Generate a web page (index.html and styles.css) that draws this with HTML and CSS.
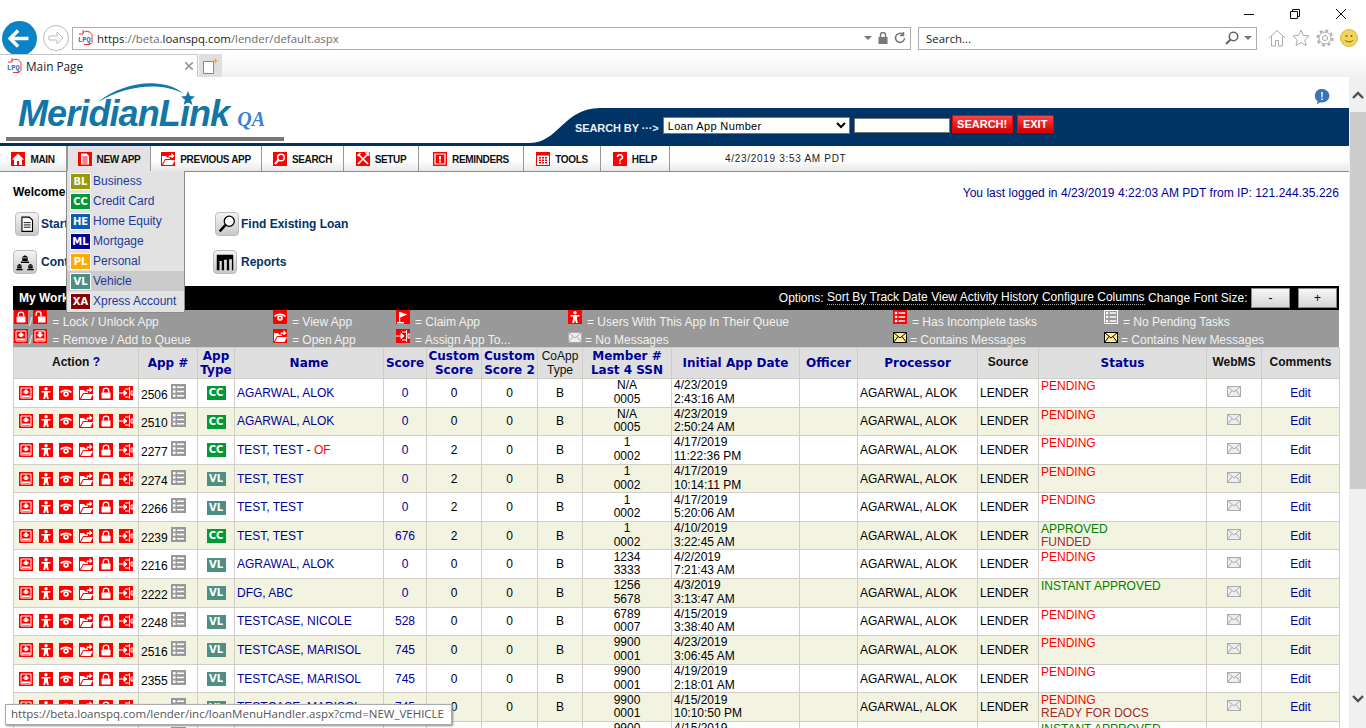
FILE: index.html
```html
<!DOCTYPE html>
<html>
<head>
<meta charset="utf-8">
<title>Main Page</title>
<link rel="stylesheet" href="styles.css">
</head>
<body>

<svg class="defs" width="0" height="0">
	<defs>
		<!-- red action icons, all on a 14 box -->
		<symbol id="i-queue" viewBox="0 0 14 14"><rect width="14" height="14" fill="#f00"/><path d="M2 2h10v10H2z" fill="none" stroke="#fff"/><path d="M7 3l3.500 3.500H8.500V8h-3V6.500H3.500z" fill="#fff"/><path d="M3 9.500h8V11H3z" fill="#fff"/></symbol>
		<symbol id="i-add" viewBox="0 0 14 14"><rect width="14" height="14" fill="#f00"/><path d="M2 2h10v10H2z" fill="none" stroke="#fff"/><path d="M7 9L3.500 5.500h2V3h3v2.500h2z" fill="#fff"/><path d="M3 9.500h8V11H3z" fill="#fff"/></symbol>
		<symbol id="i-person" viewBox="0 0 14 14"><rect width="14" height="14" fill="#f00"/><circle cx="7" cy="2.800" r="1.700" fill="#fff"/><path d="M2.500 5h9v1.500H9V9l.8 4H8L7 10l-1 3H4.200L5 9V6.500H2.500z" fill="#fff"/></symbol>
		<symbol id="i-eye" viewBox="0 0 14 14"><rect width="14" height="14" fill="#f00"/><path d="M1 6c2-3.500 10-3.500 12 0l-1.500 1C10 4.500 4 4.500 2.500 7z" fill="#fff"/><circle cx="7" cy="8" r="2.800" fill="#fff"/><circle cx="7" cy="8" r="1.100" fill="#f00"/></symbol>
		<symbol id="i-folder" viewBox="0 0 14 14"><rect width="14" height="14" fill="#f00"/><path d="M1 4h4l1 1.500h3V7H4L1 12.500z" fill="#fff"/><path d="M4.500 8H14l-2.500 5H2z" fill="#fff"/><path d="M7.500 3.500h3V1l3 3-3 2.500V5H8z" fill="#fff"/></symbol>
		<symbol id="i-lock" viewBox="0 0 14 14"><rect width="14" height="14" fill="#f00"/><path d="M4.300 6.500V4.800a2.700 2.700 0 0 1 5.400 0v1.700" fill="none" stroke="#fff" stroke-width="1.300"/><rect x="2.500" y="6.500" width="9" height="6" rx=".8" fill="#fff"/></symbol>
		<symbol id="i-unlock" viewBox="0 0 14 14"><rect width="14" height="14" fill="#f00"/><path d="M3 6V4a2.500 2.500 0 0 1 5 0v2.500" fill="none" stroke="#fff" stroke-width="1.300"/><rect x="5" y="6.500" width="7.500" height="6" fill="#fff"/></symbol>
		<symbol id="i-assign" viewBox="0 0 14 14"><rect width="14" height="14" fill="#f00"/><path d="M0 7h7M5 4.500L8 7l-3 2.500z" stroke="#fff" fill="#fff"/><path d="M6 3h4.500v8H6M10.500 1v2.500M10.500 10.500V13M12 5h2v4h-2z" stroke="#fff" fill="none"/></symbol>
		<symbol id="i-flag" viewBox="0 0 14 14"><rect width="14" height="14" fill="#f00"/><path d="M3 2h1.200v10H3zM4.200 2l7 2.500-7 3z" fill="#fff"/><path d="M1 12h7v1.500H1z" fill="#fff"/></symbol>
		<!-- task list, colour comes from the class -->
		<symbol id="i-list" viewBox="0 0 15 15"><rect width="15" height="15" fill="currentColor"/><path d="M2 2h2.500v2.500H2zM2 6.200h2.500v2.500H2zM2 10.500h2.500V13H2zM6 2.500h7v1.500H6zM6 6.700h7v1.500H6zM6 11h7v1.500H6z" fill="#fff"/></symbol>
		<symbol id="i-mail" viewBox="0 0 14 11"><rect x=".5" y=".5" width="13" height="10" fill="#eee" stroke="#aaa"/><path d="M.5 .5L7 6l6.500-5.500M.5 10.500L5 4.500M13.500 10.500L9 4.500" fill="none" stroke="#aaa"/></symbol>
		<symbol id="i-mail-new" viewBox="0 0 14 11"><rect x=".5" y=".5" width="13" height="10" fill="#ffef8a" stroke="#000"/><path d="M.5 .5L7 6l6.500-5.500M.5 10.500L5 4.500M13.500 10.500L9 4.500" fill="none" stroke="#000"/></symbol>
		<symbol id="fav" viewBox="0 0 16 16"><text x="0" y="12" font-family="Liberation Mono" font-size="7" font-weight="700" fill="#1a6fd0">LPQ</text><path d="M5 2.500a6 6 0 0 1 9 2v8l-2 2H6" fill="none" stroke="#e33"/><path d="M5 0v4H1" fill="none" stroke="#e33"/></symbol>
	</defs>
</svg>

<div class="chrome">
	<div class="winbar">
		<svg class="win-btn" viewBox="0 0 10 10"><path d="M0 5.500h10" stroke="#111"/></svg>
		<svg class="win-btn" viewBox="0 0 10 10"><path d="M.5 2.500h7v7h-7zM2.500 2.500v-2h7v7h-2" fill="none" stroke="#111"/></svg>
		<svg class="win-btn" viewBox="0 0 10 10"><path d="M0 0l10 10M10 0L0 10" stroke="#111"/></svg>
	</div>
	<div class="toolbar">
		<svg class="back" viewBox="0 0 37 37"><circle cx="18.500" cy="18.500" r="18.500" fill="#0a84c6"/><path d="M9 18.500h19M17 10l-8.500 8.500L17 27" fill="none" stroke="#fff" stroke-width="3.600"/></svg>
		<svg class="forward" viewBox="0 0 26 26"><circle cx="13" cy="13" r="12.500" fill="#fff" stroke="#bbb"/><path d="M6 11h8V7l6 6-6 6v-4H6z" fill="none" stroke="#bbb"/></svg>
		<div class="addr">
			<svg class="favicon"><use href="#fav"/></svg>
			<span class="addr-url">https<span class="addr-dim">://beta.</span>loanspq.com<span class="addr-dim">/lender/default.aspx</span></span>
			<span class="addr-tools">
				<span class="caret"></span>
				<svg class="tool-ic" viewBox="0 0 12 12"><rect x="1.500" y="5" width="9" height="7" fill="#777"/><path d="M3.500 5V3a2.500 2.500 0 0 1 5 0v2" fill="none" stroke="#777" stroke-width="1.500"/></svg>
				<svg class="tool-ic" viewBox="0 0 12 12"><path d="M10.500 6A4.500 4.500 0 1 1 9 2.500M9.500 0v3.500H6" fill="none" stroke="#777" stroke-width="1.500"/></svg>
			</span>
		</div>
		<div class="searchbox">
			<span>Search...</span>
			<span class="addr-tools">
				<svg class="tool-ic mag" viewBox="0 0 14 14"><circle cx="8.500" cy="5.500" r="4.200" fill="none" stroke="#666" stroke-width="1.600"/><path d="M5.500 8.500L1 13" stroke="#666" stroke-width="2"/></svg>
				<span class="caret"></span>
			</span>
		</div>
		<div class="toolicons">
			<svg class="ti" viewBox="0 0 18 18"><path d="M1 9l8-7.500L17 9M3.500 7.500V17h4v-5.500h3V17h4V7.500" fill="none" stroke="#aaa"/></svg>
			<svg class="ti" viewBox="0 0 18 18"><path d="M9 1l2.400 5.400 5.600.6-4.200 3.800 1.200 5.700L9 13.600 4 16.500l1.200-5.700L1 7l5.600-.6z" fill="none" stroke="#aaa"/></svg>
			<svg class="ti" viewBox="0 0 18 18"><circle cx="9" cy="9" r="2.600" fill="none" stroke="#aaa"/><circle cx="9" cy="9" r="6" fill="none" stroke="#aaa"/><circle cx="9" cy="9" r="7.500" fill="none" stroke="#aaa" stroke-width="2" stroke-dasharray="3 2.900"/></svg>
			<svg class="ti" viewBox="0 0 18 18"><circle cx="9" cy="9" r="8.500" fill="#f4d35a" stroke="#d8b84a"/><circle cx="6.500" cy="7" r="1" fill="#776622"/><circle cx="11.500" cy="7" r="1" fill="#776622"/><path d="M5 11c2 2.500 6 2.500 8 0" fill="none" stroke="#776622"/></svg>
		</div>
	</div>
	<div class="tabbar">
		<div class="tab">
			<svg class="favicon"><use href="#fav"/></svg>
			<span class="tab-title">Main Page</span>
			<svg class="tab-x" viewBox="0 0 8 8"><path d="M0 0l8 8M8 0L0 8" stroke="#999" stroke-width="1.600"/></svg>
		</div>
		<div class="newtab">
			<svg viewBox="0 0 16 16" width="16" height="16"><path d="M.5 3.500h10v12H.5z" fill="#fff" stroke="#888"/><path d="M12.500 0l.8 2 2 .6-2 .8-.8 2-.8-2-2-.8 2-.6z" fill="#f5a623"/></svg>
		</div>
	</div>
</div>

<div class="viewport">
	<div class="page">
		<div class="masthead">
			<div class="logo">
				<span class="logo-name">MeridianLink</span><span class="logo-qa">QA</span>
				<svg class="logo-swoosh" viewBox="0 0 100 30"><path d="M0 22C25 2 65-4 86 14 65 2 30 4 0 22z" fill="#1277a8"/><path d="M90 11l2 5 5 .4-4 3.300 1.400 5.300L90 22l-4.400 3 1.400-5.300-4-3.300 5-.4z" fill="#1277a8"/></svg>
				<div class="logo-rule"></div>
			</div>
			<div class="band">
				<svg class="band-curve" viewBox="0 0 70 35" preserveAspectRatio="none"><path d="M0 35C28 35 34 0 70 0v35z" fill="#003366"/></svg>
				<div class="band-body">
					<span class="band-label">SEARCH BY ···&gt;</span>
					<select class="band-select"><option>Loan App Number</option></select>
					<input class="band-input" type="text">
					<button class="band-btn band-search">SEARCH!</button>
					<button class="band-btn band-exit">EXIT</button>
				</div>
			</div>
			<svg class="notice" viewBox="0 0 16 16"><path d="M8 0a7.500 6.800 0 0 1 0 13.600c-.8 0-1.500-.1-2-.3L3 15.500l.6-3.300A6.800 6.800 0 0 1 8 0z" fill="#3a74b8"/><path d="M7.200 3h1.600l-.2 5.500H7.400zM7.200 9.500h1.600v1.600H7.200z" fill="#fff"/></svg>
		</div>

		<nav class="nav">
			<a class="nav-item n-main"><svg class="nav-ic" viewBox="0 0 14 14"><rect width="14" height="14" fill="#f00"/><path d="M7 1.500L1 7.500h2V13h3V9h2v4h3V7.500h2z" fill="#fff"/></svg>MAIN</a>
			<a class="nav-item n-new active"><svg class="nav-ic" viewBox="0 0 14 14"><rect width="14" height="14" fill="#f00"/><path d="M3 1.500h5.500L11 4v8.500H3z" fill="#fff"/><path d="M4.500 5h5M4.500 7h5M4.500 9h5M4.500 11h5" stroke="#f00"/></svg>NEW APP</a>
			<a class="nav-item n-prev"><svg class="nav-ic" viewBox="0 0 14 14"><use href="#i-folder"/></svg>PREVIOUS APP</a>
			<a class="nav-item n-search"><svg class="nav-ic" viewBox="0 0 14 14"><rect width="14" height="14" fill="#f00"/><circle cx="8" cy="5.500" r="3.300" fill="none" stroke="#fff" stroke-width="1.500"/><path d="M5.500 8L2 12" stroke="#fff" stroke-width="2"/></svg>SEARCH</a>
			<a class="nav-item n-setup"><svg class="nav-ic" viewBox="0 0 14 14"><rect width="14" height="14" fill="#f00"/><path d="M2 2l10 10M12 2L2 12M1.500 4l3-3M9.500 1h3v3" stroke="#fff" stroke-width="1.700" fill="none"/></svg>SETUP</a>
			<a class="nav-item n-rem"><svg class="nav-ic" viewBox="0 0 14 14"><rect width="14" height="14" fill="#f00"/><path d="M2 2h10v10H2z" fill="#f00" stroke="#fff" stroke-width="1.200"/><path d="M6 4h2v3.500H6zM6 8.500h2v2H6z" fill="#fff"/></svg>REMINDERS</a>
			<a class="nav-item n-tools"><svg class="nav-ic" viewBox="0 0 14 14"><rect x=".5" y=".5" width="13" height="13" fill="#fff" stroke="#f00"/><path d="M1 1h12v2.500H1zM3 5h2v1.500H3zM6 5h2v1.500H6zM9 5h2v1.500H9zM3 7.500h2V9H3zM6 7.500h2V9H6zM9 7.500h2V9H9zM3 10h2v1.500H3zM6 10h2v1.500H6zM9 10h2v1.500H9z" fill="#f00"/></svg>TOOLS</a>
			<a class="nav-item n-help"><svg class="nav-ic" viewBox="0 0 14 14"><rect width="14" height="14" fill="#f00"/><path d="M4.500 5a2.500 2.300 0 1 1 3.500 2.200L7 8v1.500" fill="none" stroke="#fff" stroke-width="1.500"/><path d="M6.200 10.500h1.600V12H6.200z" fill="#fff"/></svg>HELP</a>
			<span class="nav-date">4/23/2019 3:53 AM PDT</span>
		</nav>

		<div class="intro">
			<div class="intro-top">
				<b class="welcome">Welcome</b>
				<span class="lastlogin">You last logged in 4/23/2019 4:22:03 AM PDT from IP: 121.244.35.226</span>
			</div>
			<div class="shortcuts">
				<a class="shortcut sc-one">
					<span class="sc-ic"><svg viewBox="0 0 24 24" width="24" height="24"><path d="M6.500 4.500h8l3.500 3.500v12h-11.500z" fill="#fff" stroke="#000" stroke-width="1.200"/><path d="M8.500 10.500h7.500M8.500 13h7.500M8.500 15.500h7.500" stroke="#000"/></svg></span>Start New Application</a>
				<a class="shortcut sc-one">
					<span class="sc-ic"><svg viewBox="0 0 24 24" width="24" height="24"><circle cx="14.500" cy="9" r="5.500" fill="#fff" stroke="#000" stroke-width="1.400"/><path d="M10.500 13L4 20" stroke="#000" stroke-width="2.600"/></svg></span>Find Existing Loan</a>
				<a class="shortcut">
					<span class="sc-ic"><svg viewBox="0 0 24 24" width="24" height="24"><path d="M12 4.500l4 2.500H8zM9 8h6v3H9zM7.500 11.500h9V13h-9zM6 14l3 2H3zM3.500 16.500h5V19h-5zM2.500 19.500h7V21h-7zM18 14l3 2h-6zM15.500 16.500h5V19h-5zM14.500 19.500h7V21h-7z" fill="#000"/></svg></span>Contact Us</a>
				<a class="shortcut">
					<span class="sc-ic"><svg viewBox="0 0 24 24" width="24" height="24"><path d="M3 4h18v17h-1.500V9h-3v12H14V9.500h-3V21H8.500V11h-2.500v10H3z" fill="#000"/></svg></span>Reports</a>
			</div>
		</div>

		<div class="work">
			<div class="work-bar">
				<b class="work-title">My Work Queue</b>
				<div class="work-options">
					Options: <a>Sort By Track Date</a> <a>View Activity History</a> <a>Configure Columns</a> Change Font Size:
					<button class="font-btn">-</button><button class="font-btn">+</button>
				</div>
			</div>
			<div class="legend">
				<div class="lg lg-first"><svg class="ic"><use href="#i-lock"/></svg>/<svg class="ic"><use href="#i-unlock"/></svg><span class="lg-text">= Lock / Unlock App</span></div>
				<div class="lg"><svg class="ic"><use href="#i-eye"/></svg> = View App</div>
				<div class="lg"><svg class="ic"><use href="#i-flag"/></svg> = Claim App</div>
				<div class="lg"><svg class="ic"><use href="#i-person"/></svg> = Users With This App In Their Queue</div>
				<div class="lg"><svg class="ic tasks-red"><use href="#i-list"/></svg> = Has Incomplete tasks</div>
				<div class="lg"><svg class="ic tasks-none"><use href="#i-list"/></svg> = No Pending Tasks</div>
				<div class="lg lg-first"><svg class="ic"><use href="#i-queue"/></svg>/<svg class="ic"><use href="#i-add"/></svg><span class="lg-text">= Remove / Add to Queue</span></div>
				<div class="lg"><svg class="ic"><use href="#i-folder"/></svg> = Open App</div>
				<div class="lg"><svg class="ic"><use href="#i-assign"/></svg> = Assign App To...</div>
				<div class="lg lg-mail"><svg class="ic-mail"><use href="#i-mail"/></svg> = No Messages</div>
				<div class="lg lg-mail"><svg class="ic-mail"><use href="#i-mail-new"/></svg> = Contains Messages</div>
				<div class="lg lg-mail"><svg class="ic-mail"><use href="#i-mail-new"/></svg> = Contains New Messages</div>
			</div>

			<table class="grid">
				<colgroup>
					<col class="c125"><col class="c59"><col class="c37"><col class="c149"><col class="c43"><col class="c55"><col class="c56"><col class="c45">
					<col class="c89"><col class="c128"><col class="c58"><col class="c120"><col class="c61"><col class="c168"><col class="c55"><col class="c78">
				</colgroup>
				<thead>
					<tr>
						<th class="plain">Action <span class="q">?</span></th><th>App #</th><th>App<br>Type</th><th>Name</th><th>Score</th><th>Custom<br>Score</th><th>Custom<br>Score 2</th><th class="plain thin">CoApp<br>Type</th>
						<th>Member #<br>Last 4 SSN</th><th>Initial App Date</th><th>Officer</th><th>Processor</th><th class="plain">Source</th><th>Status</th><th class="plain">WebMS</th><th class="plain">Comments</th>
					</tr>
				</thead>
				<tbody>
					<tr>
						<td class="acts"><span class="acts-in"><svg class="ic"><use href="#i-queue"/></svg><svg class="ic"><use href="#i-person"/></svg><svg class="ic"><use href="#i-eye"/></svg><svg class="ic"><use href="#i-folder"/></svg><svg class="ic"><use href="#i-lock"/></svg><svg class="ic"><use href="#i-assign"/></svg></span></td>
						<td class="appno">2506 <svg class="list"><use href="#i-list"/></svg></td><td class="ctr"><span class="badge cc">CC</span></td><td class="name">AGARWAL, ALOK</td><td class="ctr lnk">0</td><td class="ctr">0</td><td class="ctr">0</td><td class="ctr">B</td>
						<td class="ctr two">N/A<br>0005</td><td class="date two">4/23/2019<br>2:43:16 AM</td><td></td><td class="txt">AGARWAL, ALOK</td><td class="txt">LENDER</td><td class="status"><span class="st-red">PENDING</span></td><td class="ctr"><svg class="ic-mail"><use href="#i-mail"/></svg></td><td class="ctr lnk">Edit</td>
					</tr>
					<tr>
						<td class="acts"><span class="acts-in"><svg class="ic"><use href="#i-queue"/></svg><svg class="ic"><use href="#i-person"/></svg><svg class="ic"><use href="#i-eye"/></svg><svg class="ic"><use href="#i-folder"/></svg><svg class="ic"><use href="#i-lock"/></svg><svg class="ic"><use href="#i-assign"/></svg></span></td>
						<td class="appno">2510 <svg class="list"><use href="#i-list"/></svg></td><td class="ctr"><span class="badge cc">CC</span></td><td class="name">AGARWAL, ALOK</td><td class="ctr lnk">0</td><td class="ctr">0</td><td class="ctr">0</td><td class="ctr">B</td>
						<td class="ctr two">N/A<br>0005</td><td class="date two">4/23/2019<br>2:50:24 AM</td><td></td><td class="txt">AGARWAL, ALOK</td><td class="txt">LENDER</td><td class="status"><span class="st-red">PENDING</span></td><td class="ctr"><svg class="ic-mail"><use href="#i-mail"/></svg></td><td class="ctr lnk">Edit</td>
					</tr>
					<tr>
						<td class="acts"><span class="acts-in"><svg class="ic"><use href="#i-queue"/></svg><svg class="ic"><use href="#i-person"/></svg><svg class="ic"><use href="#i-eye"/></svg><svg class="ic"><use href="#i-folder"/></svg><svg class="ic"><use href="#i-lock"/></svg><svg class="ic"><use href="#i-assign"/></svg></span></td>
						<td class="appno">2277 <svg class="list"><use href="#i-list"/></svg></td><td class="ctr"><span class="badge cc">CC</span></td><td class="name">TEST, TEST <span class="dash">-</span> <span class="of">OF</span></td><td class="ctr lnk">0</td><td class="ctr">2</td><td class="ctr">0</td><td class="ctr">B</td>
						<td class="ctr two">1<br>0002</td><td class="date two">4/17/2019<br>11:22:36 PM</td><td></td><td class="txt">AGARWAL, ALOK</td><td class="txt">LENDER</td><td class="status"><span class="st-red">PENDING</span></td><td class="ctr"><svg class="ic-mail"><use href="#i-mail"/></svg></td><td class="ctr lnk">Edit</td>
					</tr>
					<tr>
						<td class="acts"><span class="acts-in"><svg class="ic"><use href="#i-queue"/></svg><svg class="ic"><use href="#i-person"/></svg><svg class="ic"><use href="#i-eye"/></svg><svg class="ic"><use href="#i-folder"/></svg><svg class="ic"><use href="#i-lock"/></svg><svg class="ic"><use href="#i-assign"/></svg></span></td>
						<td class="appno">2274 <svg class="list"><use href="#i-list"/></svg></td><td class="ctr"><span class="badge vl">VL</span></td><td class="name">TEST, TEST</td><td class="ctr lnk">0</td><td class="ctr">2</td><td class="ctr">0</td><td class="ctr">B</td>
						<td class="ctr two">1<br>0002</td><td class="date two">4/17/2019<br>10:14:11 PM</td><td></td><td class="txt">AGARWAL, ALOK</td><td class="txt">LENDER</td><td class="status"><span class="st-red">PENDING</span></td><td class="ctr"><svg class="ic-mail"><use href="#i-mail"/></svg></td><td class="ctr lnk">Edit</td>
					</tr>
					<tr>
						<td class="acts"><span class="acts-in"><svg class="ic"><use href="#i-queue"/></svg><svg class="ic"><use href="#i-person"/></svg><svg class="ic"><use href="#i-eye"/></svg><svg class="ic"><use href="#i-folder"/></svg><svg class="ic"><use href="#i-lock"/></svg><svg class="ic"><use href="#i-assign"/></svg></span></td>
						<td class="appno">2266 <svg class="list"><use href="#i-list"/></svg></td><td class="ctr"><span class="badge vl">VL</span></td><td class="name">TEST, TEST</td><td class="ctr lnk">0</td><td class="ctr">2</td><td class="ctr">0</td><td class="ctr">B</td>
						<td class="ctr two">1<br>0002</td><td class="date two">4/17/2019<br>5:20:06 AM</td><td></td><td class="txt">AGARWAL, ALOK</td><td class="txt">LENDER</td><td class="status"><span class="st-red">PENDING</span></td><td class="ctr"><svg class="ic-mail"><use href="#i-mail"/></svg></td><td class="ctr lnk">Edit</td>
					</tr>
					<tr>
						<td class="acts"><span class="acts-in"><svg class="ic"><use href="#i-queue"/></svg><svg class="ic"><use href="#i-person"/></svg><svg class="ic"><use href="#i-eye"/></svg><svg class="ic"><use href="#i-folder"/></svg><svg class="ic"><use href="#i-lock"/></svg><svg class="ic"><use href="#i-assign"/></svg></span></td>
						<td class="appno">2239 <svg class="list tasks-red"><use href="#i-list"/></svg></td><td class="ctr"><span class="badge cc">CC</span></td><td class="name">TEST, TEST</td><td class="ctr lnk">676</td><td class="ctr">2</td><td class="ctr">0</td><td class="ctr">B</td>
						<td class="ctr two">1<br>0002</td><td class="date two">4/10/2019<br>3:22:45 AM</td><td></td><td class="txt">AGARWAL, ALOK</td><td class="txt">LENDER</td><td class="status"><span class="st-green">APPROVED</span><br><span class="st-brown">FUNDED</span></td><td class="ctr"><svg class="ic-mail"><use href="#i-mail"/></svg></td><td class="ctr lnk">Edit</td>
					</tr>
					<tr>
						<td class="acts"><span class="acts-in"><svg class="ic"><use href="#i-queue"/></svg><svg class="ic"><use href="#i-person"/></svg><svg class="ic"><use href="#i-eye"/></svg><svg class="ic"><use href="#i-folder"/></svg><svg class="ic"><use href="#i-lock"/></svg><svg class="ic"><use href="#i-assign"/></svg></span></td>
						<td class="appno">2216 <svg class="list"><use href="#i-list"/></svg></td><td class="ctr"><span class="badge vl">VL</span></td><td class="name">AGRAWAL, ALOK</td><td class="ctr lnk">0</td><td class="ctr">0</td><td class="ctr">0</td><td class="ctr">B</td>
						<td class="ctr two">1234<br>3333</td><td class="date two">4/2/2019<br>7:21:43 AM</td><td></td><td class="txt">AGARWAL, ALOK</td><td class="txt">LENDER</td><td class="status"><span class="st-red">PENDING</span></td><td class="ctr"><svg class="ic-mail"><use href="#i-mail"/></svg></td><td class="ctr lnk">Edit</td>
					</tr>
					<tr>
						<td class="acts"><span class="acts-in"><svg class="ic"><use href="#i-queue"/></svg><svg class="ic"><use href="#i-person"/></svg><svg class="ic"><use href="#i-eye"/></svg><svg class="ic"><use href="#i-folder"/></svg><svg class="ic"><use href="#i-lock"/></svg><svg class="ic"><use href="#i-assign"/></svg></span></td>
						<td class="appno">2222 <svg class="list"><use href="#i-list"/></svg></td><td class="ctr"><span class="badge vl">VL</span></td><td class="name">DFG, ABC</td><td class="ctr lnk">0</td><td class="ctr">0</td><td class="ctr">0</td><td class="ctr">B</td>
						<td class="ctr two">1256<br>5678</td><td class="date two">4/3/2019<br>3:13:47 AM</td><td></td><td class="txt">AGARWAL, ALOK</td><td class="txt">LENDER</td><td class="status"><span class="st-green">INSTANT APPROVED</span></td><td class="ctr"><svg class="ic-mail"><use href="#i-mail"/></svg></td><td class="ctr lnk">Edit</td>
					</tr>
					<tr>
						<td class="acts"><span class="acts-in"><svg class="ic"><use href="#i-queue"/></svg><svg class="ic"><use href="#i-person"/></svg><svg class="ic"><use href="#i-eye"/></svg><svg class="ic"><use href="#i-folder"/></svg><svg class="ic"><use href="#i-lock"/></svg><svg class="ic"><use href="#i-assign"/></svg></span></td>
						<td class="appno">2248 <svg class="list"><use href="#i-list"/></svg></td><td class="ctr"><span class="badge vl">VL</span></td><td class="name">TESTCASE, NICOLE</td><td class="ctr lnk">528</td><td class="ctr">0</td><td class="ctr">0</td><td class="ctr">B</td>
						<td class="ctr two">6789<br>0007</td><td class="date two">4/15/2019<br>3:38:40 AM</td><td></td><td class="txt">AGARWAL, ALOK</td><td class="txt">LENDER</td><td class="status"><span class="st-red">PENDING</span></td><td class="ctr"><svg class="ic-mail"><use href="#i-mail"/></svg></td><td class="ctr lnk">Edit</td>
					</tr>
					<tr>
						<td class="acts"><span class="acts-in"><svg class="ic"><use href="#i-queue"/></svg><svg class="ic"><use href="#i-person"/></svg><svg class="ic"><use href="#i-eye"/></svg><svg class="ic"><use href="#i-folder"/></svg><svg class="ic"><use href="#i-lock"/></svg><svg class="ic"><use href="#i-assign"/></svg></span></td>
						<td class="appno">2516 <svg class="list"><use href="#i-list"/></svg></td><td class="ctr"><span class="badge vl">VL</span></td><td class="name">TESTCASE, MARISOL</td><td class="ctr lnk">745</td><td class="ctr">0</td><td class="ctr">0</td><td class="ctr">B</td>
						<td class="ctr two">9900<br>0001</td><td class="date two">4/23/2019<br>3:06:45 AM</td><td></td><td class="txt">AGARWAL, ALOK</td><td class="txt">LENDER</td><td class="status"><span class="st-red">PENDING</span></td><td class="ctr"><svg class="ic-mail"><use href="#i-mail"/></svg></td><td class="ctr lnk">Edit</td>
					</tr>
					<tr>
						<td class="acts"><span class="acts-in"><svg class="ic"><use href="#i-queue"/></svg><svg class="ic"><use href="#i-person"/></svg><svg class="ic"><use href="#i-eye"/></svg><svg class="ic"><use href="#i-folder"/></svg><svg class="ic"><use href="#i-lock"/></svg><svg class="ic"><use href="#i-assign"/></svg></span></td>
						<td class="appno">2355 <svg class="list"><use href="#i-list"/></svg></td><td class="ctr"><span class="badge vl">VL</span></td><td class="name">TESTCASE, MARISOL</td><td class="ctr lnk">745</td><td class="ctr">0</td><td class="ctr">0</td><td class="ctr">B</td>
						<td class="ctr two">9900<br>0001</td><td class="date two">4/19/2019<br>2:18:01 AM</td><td></td><td class="txt">AGARWAL, ALOK</td><td class="txt">LENDER</td><td class="status"><span class="st-red">PENDING</span></td><td class="ctr"><svg class="ic-mail"><use href="#i-mail"/></svg></td><td class="ctr lnk">Edit</td>
					</tr>
					<tr>
						<td class="acts"><span class="acts-in"><svg class="ic"><use href="#i-queue"/></svg><svg class="ic"><use href="#i-person"/></svg><svg class="ic"><use href="#i-eye"/></svg><svg class="ic"><use href="#i-folder"/></svg><svg class="ic"><use href="#i-lock"/></svg><svg class="ic"><use href="#i-assign"/></svg></span></td>
						<td class="appno">2354 <svg class="list"><use href="#i-list"/></svg></td><td class="ctr"><span class="badge vl">VL</span></td><td class="name">TESTCASE, MARISOL</td><td class="ctr lnk">745</td><td class="ctr">0</td><td class="ctr">0</td><td class="ctr">B</td>
						<td class="ctr two">9900<br>0001</td><td class="date two">4/15/2019<br>10:10:50 PM</td><td></td><td class="txt">AGARWAL, ALOK</td><td class="txt">LENDER</td><td class="status"><span class="st-red">PENDING</span><br><span class="st-brown">READY FOR DOCS</span></td><td class="ctr"><svg class="ic-mail"><use href="#i-mail"/></svg></td><td class="ctr lnk">Edit</td>
					</tr>
					<tr>
						<td class="acts"><span class="acts-in"><svg class="ic"><use href="#i-queue"/></svg><svg class="ic"><use href="#i-person"/></svg><svg class="ic"><use href="#i-eye"/></svg><svg class="ic"><use href="#i-folder"/></svg><svg class="ic"><use href="#i-lock"/></svg><svg class="ic"><use href="#i-assign"/></svg></span></td>
						<td class="appno">2353 <svg class="list"><use href="#i-list"/></svg></td><td class="ctr"><span class="badge vl">VL</span></td><td class="name">TESTCASE, MARISOL</td><td class="ctr lnk">745</td><td class="ctr">0</td><td class="ctr">0</td><td class="ctr">B</td>
						<td class="ctr two">9900<br>0001</td><td class="date two">4/15/2019<br>10:02:11 PM</td><td></td><td class="txt">AGARWAL, ALOK</td><td class="txt">LENDER</td><td class="status"><span class="st-green">INSTANT APPROVED</span></td><td class="ctr"><svg class="ic-mail"><use href="#i-mail"/></svg></td><td class="ctr lnk">Edit</td>
					</tr>
				</tbody>
			</table>
		</div>

		<!-- open New App dropdown -->
		<div class="menu">
			<a class="menu-item"><span class="mb bl">BL</span>Business</a>
			<a class="menu-item"><span class="mb cc">CC</span>Credit Card</a>
			<a class="menu-item"><span class="mb he">HE</span>Home Equity</a>
			<a class="menu-item"><span class="mb ml">ML</span>Mortgage</a>
			<a class="menu-item"><span class="mb pl">PL</span>Personal</a>
			<a class="menu-item hover"><span class="mb vl">VL</span>Vehicle</a>
			<a class="menu-item"><span class="mb xa">XA</span>Xpress Account</a>
		</div>
	</div>

	<div class="scrollbar">
		<div class="sb-up"><svg viewBox="0 0 12 8" width="12" height="8"><path d="M1 7l5-5 5 5" fill="none" stroke="#505050" stroke-width="2.400"/></svg></div>
		<div class="sb-thumb"></div>
		<div class="sb-track"></div>
		<div class="sb-down"><svg viewBox="0 0 12 8" width="12" height="8"><path d="M1 1l5 5 5-5" fill="none" stroke="#505050" stroke-width="2.400"/></svg></div>
	</div>

	<div class="statusurl">https://beta.loanspq.com/lender/inc/loanMenuHandler.aspx?cmd=NEW_VEHICLE</div>
</div>

</body>
</html>
```

FILE: styles.css
```css
html, body{
	margin: 0;
	height: 728px;
	overflow: hidden;
	background: #fff;
	font-family: "Liberation Sans", Arial, sans-serif;
	font-size: 12px;
	color: #000;
}

.defs{
	position: absolute;
}

/* browser frame */
.chrome{
	height: 77px;
	font-family: "Open Sans", "Noto Sans", sans-serif;
}

.winbar{
	height: 22px;
	display: flex;
	justify-content: flex-end;
	align-items: center;
	gap: 36px;
	padding: 6px 20px 0 0;
	box-sizing: border-box;
}

.win-btn{
	width: 10px;
	height: 10px;
}

.toolbar{
	height: 32px;
	display: flex;
	align-items: center;
	padding-left: 1px;
}

.back{
	width: 37px;
	height: 35px;
	flex: none;
}

.forward{
	width: 26px;
	height: 26px;
	margin-left: 5px;
	flex: none;
}

.addr, .searchbox{
	height: 23px;
	box-sizing: border-box;
	border: 1px solid #adadad;
	display: flex;
	align-items: center;
	font-size: 11.400px;
	color: #222;
}

.addr{
	width: 839px;
	margin-left: 3px;
	padding-left: 5px;
}

.addr-url{
	margin-left: 3px;
}

.addr-dim{
	color: #6d6d6d;
}

.addr-tools{
	margin-left: auto;
	display: flex;
	align-items: center;
	gap: 5px;
	padding-right: 4px;
}

.caret{
	width: 0;
	height: 0;
	border: 4px solid transparent;
	border-top-color: #777;
	border-bottom: 0;
}

.tool-ic{
	width: 12px;
	height: 12px;
}

.mag{
	width: 14px;
	height: 14px;
}

.searchbox{
	width: 339px;
	margin-left: 7px;
	padding-left: 7px;
}

.toolicons{
	display: flex;
	gap: 6px;
	margin-left: 11px;
}

.ti{
	width: 18px;
	height: 18px;
}

.favicon{
	width: 16px;
	height: 16px;
	flex: none;
}

.tabbar{
	height: 23px;
	display: flex;
	background: linear-gradient(#fff, #f0f0f0);
}

.tab{
	width: 198px;
	box-sizing: border-box;
	background: #fff;
	border-top: 1px solid #c8c8c8;
	border-right: 1px solid #c8c8c8;
	display: flex;
	align-items: center;
	padding-left: 7px;
	font-size: 11.800px;
	color: #222;
}

.tab-title{
	margin-left: 3px;
}

.tab-x{
	width: 8px;
	height: 8px;
	margin-left: auto;
	margin-right: 4px;
}

.newtab{
	width: 23px;
	margin-left: 1px;
	background: #dfdfdf;
	display: flex;
	align-items: center;
	justify-content: center;
}

.viewport{
	height: 651px;
	display: flex;
	position: relative;
	overflow: hidden;
}

.page{
	width: 1349px;
	position: relative;
	overflow: hidden;
}

.scrollbar{
	width: 17px;
	background: #f0f0f0;
	display: flex;
	flex-direction: column;
}

.sb-up, .sb-down{
	height: 17px;
	display: flex;
	align-items: center;
	justify-content: center;
}

.sb-up{
	height: 35px;
}

.sb-down{
	height: 36px;
	align-items: flex-start;
	padding-top: 3px;
	box-sizing: border-box;
}

.sb-thumb{
	height: 377px;
	margin-left: 1px;
	background: #cdcdcd;
}

.sb-track{
	flex: 1;
}

/* masthead */
.masthead{
	height: 69px;
	box-sizing: border-box;
	border-bottom: 3px solid #003366;
	display: flex;
	align-items: flex-end;
	position: relative;
}

.logo{
	width: 530px;
	height: 66px;
	position: relative;
	flex: none;
	padding-left: 18px;
	box-sizing: border-box;
}

.logo-name{
	display: inline-block;
	margin-top: 17px;
	font-size: 36px;
	line-height: 40px;
	font-weight: 700;
	font-style: italic;
	color: #1277a8;
	letter-spacing: -.9px;
}

.logo-qa{
	margin-left: 8px;
	font-family: "Liberation Serif", serif;
	font-size: 20px;
	font-weight: 700;
	font-style: italic;
	color: #3a7fd8;
}

.logo-swoosh{
	position: absolute;
	left: 98px;
	top: 3px;
	width: 100px;
	height: 30px;
}

.logo-rule{
	position: absolute;
	left: 6px;
	top: 60px;
	width: 278px;
	height: 4px;
	background: #777;
}

.band{
	flex: 1;
	height: 35px;
	display: flex;
}

.band-curve{
	width: 70px;
	height: 35px;
	flex: none;
}

.band-body{
	flex: 1;
	background: #003366;
	display: flex;
	align-items: flex-start;
	margin-left: -1px;
}

.band-label{
	margin: 14px 0 0 -24px;
	font-size: 11px;
	line-height: 13px;
	font-weight: 700;
	letter-spacing: -.1px;
	color: #e8eef5;
	position: relative;
	white-space: nowrap;
}

.band-select{
	width: 187px;
	height: 17px;
	margin: 9px 0 0 4px;
	padding: 0;
	font-family: "Liberation Sans", sans-serif;
	font-size: 11px;
	letter-spacing: .35px;
	background: #fff;
	border: 1px solid #767676;
	border-radius: 0;
}

.band-input{
	width: 96px;
	height: 15px;
	box-sizing: border-box;
	margin: 10px 0 0 4px;
	padding: 0;
	border: 1px solid #767676;
	background: #fff;
}

.band-btn{
	height: 18px;
	margin-top: 7px;
	padding: 0;
	box-sizing: border-box;
	background: linear-gradient(#f44, #c00);
	border: 1px solid #e00;
	color: #fff;
	font-family: "Liberation Sans", sans-serif;
	font-size: 11px;
	font-weight: 700;
}

.band-search{
	width: 61px;
	margin-left: 2px;
}

.band-exit{
	width: 37px;
	margin-left: 4px;
}

.notice{
	position: absolute;
	right: 19px;
	top: 12px;
	width: 16px;
	height: 16px;
}

/* main nav */
.nav{
	height: 26px;
	box-sizing: border-box;
	border-bottom: 1px solid #8c8c8c;
	background: linear-gradient(#fff 55%, #e8e8e8);
	display: flex;
	align-items: stretch;
}

.nav-item{
	box-sizing: border-box;
	border-right: 1px solid #999;
	display: flex;
	align-items: center;
	justify-content: center;
	gap: 5px;
	padding-top: 1px;
	font-size: 10px;
	font-weight: 700;
	color: #111;
	letter-spacing: -.35px;
}

.nav-item.active{
	background: #e4e2e4;
	border-left: 1px solid #999;
}

.nav-ic{
	width: 14px;
	height: 14px;
	flex: none;
}

.n-main{ width: 67px; }
.n-new{ width: 84px; }
.n-prev{ width: 111px; }
.n-search{ width: 82px; }
.n-setup{ width: 75px; }
.n-rem{ width: 105px; }
.n-tools{ width: 77px; }
.n-help{ width: 69px; }

.nav-date{
	margin-left: 55px;
	align-self: center;
	font-size: 10px;
	letter-spacing: .7px;
	color: #222;
}

/* welcome + shortcuts */
.intro{
	height: 114px;
	box-sizing: border-box;
	padding: 13px 10px 0 13px;
}

.intro-top{
	display: flex;
	justify-content: space-between;
	align-items: center;
	height: 14px;
}

.welcome{
	font-size: 12px;
}

.lastlogin{
	color: #000099;
	letter-spacing: .03px;
	padding-top: 2px;
}

.shortcuts{
	display: grid;
	grid-template-columns: 200px 200px;
	grid-auto-rows: 38px;
	margin-top: 13px;
}

.shortcut{
	display: flex;
	align-items: center;
	gap: 4px;
	height: 24px;
	font-weight: 700;
	color: #003366;
	white-space: nowrap;
}

.sc-one{
	padding-left: 2px;
	gap: 2px;
}

.sc-ic{
	width: 24px;
	height: 24px;
	flex: none;
	border-radius: 4px;
	border: 1px solid #bbb;
	box-sizing: border-box;
	background: linear-gradient(#f4f4f4, #c9c9c9);
	overflow: hidden;
	display: flex;
	align-items: center;
	justify-content: center;
}

/* work queue */
.work{
	width: 1326px;
	margin-left: 13px;
}

.work-bar{
	height: 24px;
	background: #000;
	color: #fff;
	display: flex;
	justify-content: space-between;
	align-items: center;
	padding: 0 2px 0 6px;
}

.work-title{
	font-size: 12px;
}

.work-options{
	display: flex;
	align-items: center;
	gap: 3.500px;
}

.work-options a{
	border-bottom: 1px dotted #aaa;
	line-height: 13px;
}

.font-btn{
	width: 39px;
	height: 20px;
	padding: 0;
	background: linear-gradient(#f6f6f6, #d6d6d6);
	border: 1px solid #888;
	font-family: "Liberation Sans", sans-serif;
	font-size: 12px;
	color: #000;
}

.font-btn + .font-btn{
	margin-left: 4.500px;
}

.legend{
	height: 37px;
	background: #999;
	color: #f1f1f1;
	display: grid;
	grid-template-columns: 259px 123px 172px 325px 211px 1fr;
	grid-template-rows: 19px 18px;
	padding-left: 1px;
	box-sizing: border-box;
}

.lg{
	white-space: nowrap;
	display: flex;
	align-items: flex-end;
	gap: 5px;
	line-height: 14px;
}

.lg .ic{
	align-self: flex-start;
}

.lg-first{
	gap: 1px;
}

.lg-text{
	margin-left: 4px;
}

.lg-mail{
	gap: 3px;
}

.lg .ic-mail{
	align-self: flex-start;
	margin-top: 3px;
}

.ic{
	width: 14px;
	height: 14px;
	flex: none;
}

.ic-mail{
	width: 14px;
	height: 11px;
	flex: none;
}

.tasks-red{
	color: #f00;
}

.tasks-none{
	color: transparent;
	outline: 1px solid #fff;
	outline-offset: -1px;
}

/* data grid */
.grid{
	width: 1326px;
	table-layout: fixed;
	border-collapse: collapse;
}

.c125{ width: 125px; }
.c59{ width: 59px; }
.c37{ width: 37px; }
.c149{ width: 149px; }
.c43{ width: 43px; }
.c55{ width: 55px; }
.c56{ width: 56px; }
.c45{ width: 45px; }
.c89{ width: 89px; }
.c128{ width: 128px; }
.c58{ width: 58px; }
.c120{ width: 120px; }
.c61{ width: 61px; }
.c168{ width: 168px; }
.c78{ width: 78px; }

.grid th, .grid td{
	box-sizing: border-box;
	border: 1px solid #d0cec6;
	padding: 0;
	overflow: hidden;
	white-space: nowrap;
}

.grid th{
	height: 31px;
	background: #dfdfdf;
	font-family: "DejaVu Sans", Verdana, sans-serif;
	font-size: 12px;
	line-height: 14px;
	font-weight: 700;
	color: #000099;
}

.grid th.plain{
	font-family: "Liberation Sans", sans-serif;
	color: #111;
	padding-bottom: 2px;
}

.grid th.thin{
	font-weight: 400;
	padding-bottom: 0;
}

.q{
	color: #000099;
}

.grid td{
	height: 28.580px;
	line-height: 14px;
}

.grid td.two{
	line-height: 13.500px;
}

.grid tbody tr:nth-child(even) td{
	background: #f3f3e1;
}

.acts{
	padding-left: 5px !important;
}

.acts-in{
	display: flex;
	gap: 6px;
}

.appno{
	padding-left: 2px !important;
}

.list{
	width: 15px;
	height: 15px;
	color: #999;
	vertical-align: 0;
}

.ctr{
	text-align: center;
}

.lnk{
	color: #000099;
}

.name{
	padding-left: 2px !important;
	color: #000099;
}

.dash{
	color: #111;
}

.of{
	color: #f00;
}

.date{
	padding-left: 2px !important;
}

.txt{
	padding-left: 2px !important;
}

.status{
	padding: 1px 0 0 2px !important;
	vertical-align: top;
	line-height: 13px !important;
}

.st-red{ color: #f00; }
.st-green{ color: #008000; }
.st-brown{ color: #a52a2a; }

.badge{
	display: inline-block;
	width: 19px;
	height: 14px;
	line-height: 14px;
	font-family: "DejaVu Sans", sans-serif;
	font-size: 10px;
	font-weight: 700;
	color: #fff;
	text-align: center;
}

.cc{ background: #009933; }
.vl{ background: #4c9084; }
.bl{ background: #999900; }
.he{ background: #0b5cb5; }
.ml{ background: #000099; }
.pl{ background: #ffaa00; }
.xa{ background: #8b0000; }

/* dropdown, lies over the intro */
.menu{
	position: absolute;
	left: 66px;
	top: 94px;
	width: 119px;
	height: 142px;
	box-sizing: border-box;
	background: #e2e2e2;
	border: 1px solid #8c8c8c;
	border-top: 0;
}

.menu-item{
	display: flex;
	align-items: center;
	gap: 2px;
	height: 20px;
	padding-left: 3px;
	color: #1a3a9c;
}

.menu-item.hover{
	background: #cbcbcb;
}

.mb{
	width: 19px;
	height: 15px;
	line-height: 15px;
	flex: none;
	border: 1px solid #fff;
	font-family: "DejaVu Sans", sans-serif;
	font-size: 10px;
	font-weight: 700;
	color: #fff;
	text-align: center;
}

/* link preview, lies over the table */
.statusurl{
	position: absolute;
	left: 5px;
	top: 627px;
	height: 19px;
	line-height: 18px;
	padding: 0 7px 0 5px;
	background: #fff;
	border: 1px solid #aaa;
	box-shadow: 1px 1px 2px #888;
	font-family: "Open Sans", "Noto Sans", sans-serif;
	font-size: 11.500px;
	color: #555;
	white-space: nowrap;
}
```
